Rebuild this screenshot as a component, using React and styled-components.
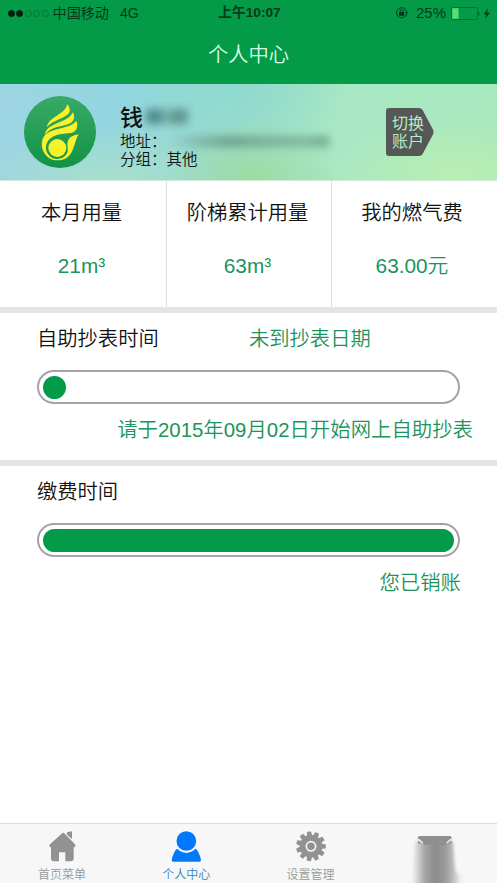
import React from "react";
import styled, { createGlobalStyle } from "styled-components";

const Colors = {
  green: "#039a48",
  greenText: "#1b945b",
  statusText: "#023a17",
  titleText: "#d6ffe6",
  line: "#e4e4e4",
  track: "#a5a3a6",
  tabGrey: "#929292",
  tabBlue: "#0079fb",
};

const stats = [
  { label: "本月用量", value: "21m³" },
  { label: "阶梯累计用量", value: "63m³" },
  { label: "我的燃气费", value: "63.00元" },
];

function FlameLogo() {
  return (
    <svg width="72" height="72" viewBox="0 0 216 216">
      <defs>
        <linearGradient id="logoGreen" x1="0" y1="0" x2="0" y2="1">
          <stop offset="0" stopColor="#38aa66" />
          <stop offset="1" stopColor="#129246" />
        </linearGradient>
      </defs>
      <circle cx="108" cy="108" r="108" fill="url(#logoGreen)" />
      <g fill="#f8f22a">
        <path d="M130 25 C139 36 140 46 132 55 C116 69 88 72 68 94 C76 60 121 58 130 25 Z" />
        <path d="M146 49 C154 62 151 74 139 82 C115 94 81 89 63 117 C66 79 133 83 146 49 Z" />
        <path d="M157 74 C164 92 158 108 140 111 C118 114 96 113 80 127 A34 34 0 1 0 131 168 C133 160 128 148 131 138 C134 124 145 119 164 115 C156 127 155 140 148 156 C140 184 120 193 100 193 C70 193 50 165 54 138 C57 112 80 104 105 98 C128 92 148 88 157 74 Z" />
        <circle cx="100" cy="156" r="27" />
      </g>
    </svg>
  );
}

function LockIcon() {
  return (
    <svg width="14" height="12" viewBox="0 0 14 12" fill="none" stroke={Colors.statusText}>
      <path d="M11.5 7.3 A5.1 5.1 0 1 1 11.6 4.7" />
      <path d="M9.9 5.3 L13.4 5.3 L11.7 7.6 Z" fill={Colors.statusText} stroke="none" />
      <rect x="4" y="5" width="5.2" height="3.8" fill={Colors.statusText} stroke="none" />
      <path d="M5.1 5.4 V4.2 A1.5 1.5 0 0 1 8.1 4.2 V5.4" />
    </svg>
  );
}

function BatteryIcon() {
  return (
    <svg width="40" height="13" viewBox="0 0 40 13">
      <rect x="0.5" y="0.5" width="26" height="12" rx="1.2" fill="none" stroke="#047337" />
      <rect x="1.2" y="1.2" width="6.3" height="10.6" fill="#56dd73" />
      <path d="M27.5 4 Q29.3 6.5 27.5 9 Z" fill={Colors.statusText} />
      <path d="M37 1.5 L32.5 7.3 H35.2 L34.1 11.8 L39 5.8 H36 Z" fill={Colors.statusText} />
    </svg>
  );
}

function HomeIcon() {
  return (
    <svg width="30" height="31" viewBox="0 0 90 93" fill={Colors.tabGrey}>
      <path d="M47 6 Q49 4 52 7 L84 40 Q87 44 84 47 Q82 49 80 49 V82 Q80 91 71 91 H55 V64 H36 V91 H21 Q12 91 12 82 V49 Q7 49 7 44 Q7 42 9 40 L43 9 Z" />
      <path d="M60 4 L75 1 V24 L60 11 Z" />
    </svg>
  );
}

function UserIcon() {
  return (
    <svg width="30" height="31" viewBox="0 0 90 93" fill={Colors.tabBlue}>
      <circle cx="46" cy="30" r="29.5" />
      <path d="M19 53 A35 35 0 0 0 73 53 Q77 54 80 60 C85 69 89 79 90 88 Q90 92 85 92 H7 Q2 92 2 88 C3 79 7 69 12 60 Q15 54 19 53 Z" />
    </svg>
  );
}

function GearIcon() {
  const teeth = Array.from({ length: 11 }, (_, i) => (i * 360) / 11 - 8);
  return (
    <svg width="30" height="31" viewBox="0 0 90 93" fill={Colors.tabGrey}>
      {teeth.map((angle) => (
        <path
          key={angle}
          d="M37 18 L38.5 3 Q38.8 1.5 40.5 1.5 H49.5 Q51.2 1.5 51.5 3 L53 18 Z"
          transform={`rotate(${angle} 45 46)`}
        />
      ))}
      <circle cx="45" cy="46" r="34" />
      <circle cx="45" cy="46" r="14" fill="none" stroke="#f7f7f7" strokeWidth="5" />
    </svg>
  );
}

function MoreIcon() {
  return (
    <svg width="75" height="48" viewBox="0 0 75 48">
      <defs>
        <linearGradient id="moreFade" x1="0" x2="1">
          <stop offset="0" stopColor="#bbb" stopOpacity="0" />
          <stop offset="0.25" stopColor="#a8a8a8" />
          <stop offset="0.45" stopColor="#8c8c8c" />
          <stop offset="0.65" stopColor="#999" />
          <stop offset="0.82" stopColor="#bdbdbd" />
          <stop offset="1" stopColor="#ddd" stopOpacity="0" />
        </linearGradient>
        <filter id="moreBlur" x="-30%" y="-30%" width="160%" height="160%">
          <feGaussianBlur stdDeviation="1.8" />
        </filter>
      </defs>
      <path d="M18 5 H56 L58 34 L66 42 L60 56 H14 Z" fill="url(#moreFade)" filter="url(#moreBlur)" />
      <path d="M21 1.5 Q21 0 22.5 0 H53 Q54.5 0 54.5 1.5 V3 L48 9 H28 L21 3 Z" fill="#8f8f8f" />
      <path d="M21.5 3 L26 7 M54 3 L49.5 7" stroke="#ededed" strokeWidth="1.1" />
      <path d="M21 4.5 V7.5 H24.5 Z M54.5 4.5 V7.5 H51 Z" fill="#929292" />
    </svg>
  );
}

// Personal center page
export default function App() {
  return (
    <>
      <GlobalStyle />
      <Page>
        <Header>
          <StatusBar>
            <Carrier>
              <Dots>
                <Dot $filled />
                <Dot $filled />
                <Dot />
                <Dot />
                <Dot />
              </Dots>
              <CarrierName>中国移动</CarrierName>
              <span>4G</span>
            </Carrier>
            <Clock>上午10:07</Clock>
            <StatusIcons>
              <LockIcon />
              <Percent>25%</Percent>
              <BatteryIcon />
            </StatusIcons>
          </StatusBar>
          <Title>个人中心</Title>
        </Header>

        {/* Account banner */}
        <Banner>
          <FlameLogo />
          <Account>
            <Name>
              钱<NameMask />
            </Name>
            <Detail>
              地址：<AddressMask />
            </Detail>
            <Detail>分组：其他</Detail>
          </Account>
          <SwitchButton>
            <SwitchShape viewBox="0 0 48 48">
              <path
                d="M3 0 H33 Q35.4 0 36.6 2 L47.2 22 Q48 24 47.2 26 L36.6 46 Q35.4 48 33 48 H3 Q0 48 0 45 V3 Q0 0 3 0 Z"
                fill="#555856"
              />
            </SwitchShape>
            <SwitchText>
              切换
              <br />
              账户
            </SwitchText>
          </SwitchButton>
        </Banner>

        <Stats>
          {stats.map((s) => (
            <Stat key={s.label}>
              <StatLabel>{s.label}</StatLabel>
              <StatValue>{s.value}</StatValue>
            </Stat>
          ))}
        </Stats>

        <Section>
          <SectionHead>
            <SectionTitle>自助抄表时间</SectionTitle>
            <SectionState>未到抄表日期</SectionState>
          </SectionHead>
          <Track>
            <Fill $width="23px" />
          </Track>
          <Note $right="24px">请于2015年09月02日开始网上自助抄表</Note>
        </Section>

        <Section>
          <SectionHead>
            <SectionTitle>缴费时间</SectionTitle>
          </SectionHead>
          <Track>
            <Fill $width="100%" />
          </Track>
          <Note $right="36px">您已销账</Note>
        </Section>

        <Spacer />

        <TabBar>
          <Tab>
            <HomeIcon />
            <TabLabel>首页菜单</TabLabel>
          </Tab>
          <Tab>
            <UserIcon />
            <TabLabel $active>个人中心</TabLabel>
          </Tab>
          <Tab>
            <GearIcon />
            <TabLabel>设置管理</TabLabel>
          </Tab>
          <MoreTab>
            <MoreIcon />
          </MoreTab>
        </TabBar>
      </Page>
    </>
  );
}

const GlobalStyle = createGlobalStyle`
  * {
    box-sizing: border-box;
  }
  body {
    margin: 0;
    font-family: "Liberation Sans", "Noto Sans CJK SC", sans-serif;
    font-weight: 350;
  }
  svg {
    display: block;
    flex-shrink: 0;
  }
`

const Page = styled.div`
  display: flex;
  flex-direction: column;
  width: 497px;
  height: 883px;
  overflow: hidden;
  background-color: #fff;
  color: #111;
  white-space: nowrap;
`

const Header = styled.header`
  height: 84px;
  background-color: ${Colors.green};
`

const StatusBar = styled.div`
  display: grid;
  grid-template-columns: 1fr auto 1fr;
  align-items: center;
  height: 26px;
  padding: 0 6px 0 8px;
  font-size: 14.1px;
  font-weight: 400;
  line-height: 20px;
  color: ${Colors.statusText};
`

const Carrier = styled.div`
  display: flex;
  align-items: center;
`

const Dots = styled.div`
  display: flex;
  gap: 1.4px;
  margin-right: 4px;
`

const Dot = styled.span`
  width: 7px;
  height: 7px;
  border-radius: 50%;
  border: 1px solid ${(p) => (p.$filled ? "#02200c" : "#04722f")};
  background-color: ${(p) => (p.$filled ? "#02200c" : "transparent")};
`

const CarrierName = styled.span`
  margin-right: 11px;
`

const Clock = styled.div`
  font-size: 13.7px;
  font-weight: 700;
`

const StatusIcons = styled.div`
  display: flex;
  align-items: center;
  justify-content: flex-end;
`

const Percent = styled.span`
  margin: 0 5px 0 7px;
  font-size: 15px;
`

const Title = styled.h1`
  margin: 0;
  font-size: 20.3px;
  font-weight: 350;
  line-height: 59px;
  text-align: center;
  color: ${Colors.titleText};
`

const Banner = styled.section`
  display: flex;
  align-items: flex-start;
  height: 97px;
  padding: 12px 0 0 24px;
  border-bottom: 1px solid #d2e8d8;
  background:
    radial-gradient(ellipse 90px 60px at 51% 100%, rgba(157, 219, 148, 0.75), transparent),
    radial-gradient(ellipse 130px 60px at 92% 96%, rgba(190, 240, 175, 0.8), transparent),
    radial-gradient(ellipse 130px 60px at 22% 100%, rgba(174, 226, 199, 0.8), transparent),
    radial-gradient(ellipse 120px 70px at 47% 0%, rgba(138, 216, 209, 0.7), transparent),
    linear-gradient(98deg, #9fd5e3 0%, #91d5e0 24%, #9bdcca 48%, #a9e8c4 68%, #a8e8bd 100%);
`

const Account = styled.div`
  width: 266px;
  margin: 8px 0 0 24px;
`

const Name = styled.div`
  display: flex;
  align-items: center;
  height: 27px;
  line-height: 24px;
  font-size: 23px;
  font-weight: 500;
`

const NameMask = styled.span`
  width: 42px;
  height: 15px;
  margin-left: 3px;
  margin-bottom: 2px;
  background: linear-gradient(90deg, #477e80 0 32%, #78b7b0 48%, #568b82 64% 100%);
  opacity: 0.85;
  filter: blur(4px);
`

const Detail = styled.div`
  display: flex;
  align-items: center;
  height: 18px;
  font-size: 15.5px;
`

const AddressMask = styled.span`
  width: 162px;
  height: 11px;
  margin-top: 3px;
  background: linear-gradient(90deg, transparent 0, #79aaa0 20%, #5b897b 38%, #689989 60%, #72a58f 85%, #5a8b75 100%);
  opacity: 0.7;
  filter: blur(4px);
`

const SwitchButton = styled.button`
  position: relative;
  width: 48px;
  height: 48px;
  margin: 12px 0 0;
  padding: 0;
  border: none;
  background: none;
  font-family: inherit;
`

const SwitchShape = styled.svg`
  width: 48px;
  height: 48px;
`

const SwitchText = styled.span`
  position: absolute;
  top: 7px;
  left: 6px;
  font-size: 16px;
  font-weight: 400;
  line-height: 18px;
  color: #b4edc5;
`

const Stats = styled.section`
  display: grid;
  grid-template-columns: 167px 165px 1fr;
  height: 132px;
  border-bottom: 6px solid ${Colors.line};
`

const Stat = styled.div`
  padding: 16px 3px 0 0;
  text-align: center;
  border-right: 1px solid #dedede;
  &:last-child {
    border-right: none;
    padding-right: 5px;
  }
`

const StatLabel = styled.div`
  font-size: 20.3px;
  line-height: 32px;
`

const StatValue = styled.div`
  margin-top: 21px;
  font-size: 20.8px;
  line-height: 32px;
  color: ${Colors.greenText};
`

const Section = styled.section`
  height: 153px;
  padding-top: 10px;
  border-bottom: 6px solid ${Colors.line};
  & + & {
    border-bottom: none;
  }
`

const SectionHead = styled.div`
  display: grid;
  grid-template-columns: 212px 1fr;
  padding-left: 37px;
  font-size: 20.3px;
  line-height: 32px;
`

const SectionTitle = styled.div``

const SectionState = styled.div`
  color: ${Colors.greenText};
`

const Track = styled.div`
  width: 423px;
  height: 34px;
  margin: 15px 0 0 37px;
  padding: 3.5px 4px;
  border: 2px solid ${Colors.track};
  border-radius: 17px;
`

const Fill = styled.div`
  width: ${(p) => p.$width};
  height: 23px;
  border-radius: 12px;
  background-color: ${Colors.green};
`

const Note = styled.div`
  margin-top: 10px;
  padding-right: ${(p) => p.$right};
  font-size: 20.4px;
  line-height: 32px;
  text-align: right;
  color: ${Colors.greenText};
`

const Spacer = styled.div`
  flex: 1;
`

const TabBar = styled.nav`
  display: grid;
  grid-template-columns: repeat(4, 1fr);
  height: 60px;
  border-top: 1px solid #dcdcdc;
  background-color: #f7f7f7;
`

const Tab = styled.div`
  display: flex;
  flex-direction: column;
  align-items: center;
  padding-top: 7px;
`

const MoreTab = styled(Tab)`
  padding-top: 12px;
`

const TabLabel = styled.span`
  margin-top: 4px;
  font-size: 12px;
  line-height: 18px;
  color: ${(p) => (p.$active ? "#3383c5" : "#999")};
`
